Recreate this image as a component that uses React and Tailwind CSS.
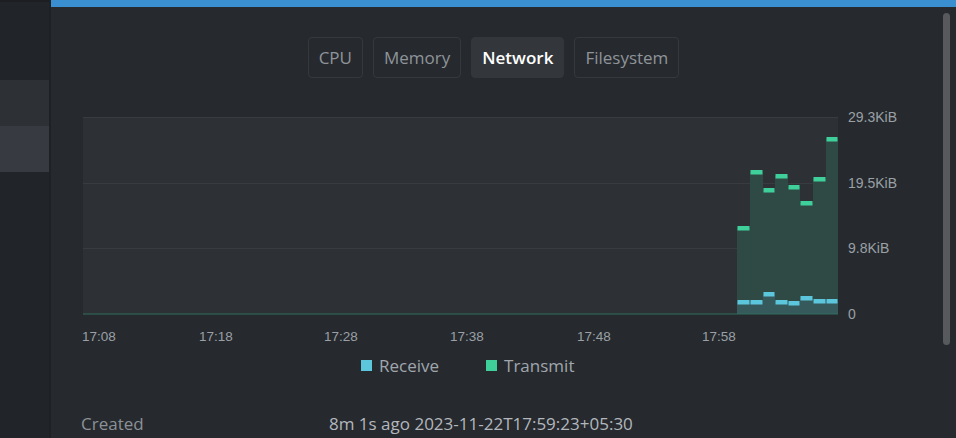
import React from 'react';

// Network chart data: step bars (x in page px, top y in page px)
const STEP_X = [737, 750, 763, 775, 788, 800, 813, 826, 838];
const TX_TOP = [228, 172, 190, 176, 187, 203, 179, 139];
const RX_TOP = [302, 302, 294, 302, 303, 298, 301, 301];

const OX = 81;
const OY = 108;

const tabs = ['CPU', 'Memory', 'Network', 'Filesystem'];

const Tab = ({ label, active }) => (
  <button
    type="button"
    className={`h-[41px] px-[10px] rounded-[4px] text-[17px] ${
      active
        ? 'bg-[#33363b] border border-[#33363b] text-white font-semibold'
        : 'border border-[#35393e] text-[#8f949a]'
    }`}
  >
    {label}
  </button>
);

function stepPath(tops, bottom) {
  let d = `M${STEP_X[0] - OX},${bottom - OY}`;
  tops.forEach((t, i) => {
    d += ` L${STEP_X[i] - OX},${t - OY} L${STEP_X[i + 1] - OX},${t - OY}`;
  });
  d += ` L${STEP_X[STEP_X.length - 1] - OX},${bottom - OY} Z`;
  return d;
}

const NetworkChart = () => {
  const plotL = 83 - OX;
  const plotR = 838 - OX;
  const gridY = [117, 183, 248, 314].map(y => y - OY);
  const yLabels = ['29.3KiB', '19.5KiB', '9.8KiB', '0'];
  const xLabels = [
    ['17:08', 82],
    ['17:18', 199],
    ['17:28', 324],
    ['17:38', 450],
    ['17:48', 577],
    ['17:58', 702],
  ];
  return (
    <svg width="840" height="240" className="block" style={{ fontFamily: '"Liberation Sans", Arial, sans-serif' }}>
      <rect x={plotL} y={gridY[0]} width={plotR - plotL} height={gridY[3] - gridY[0]} fill="#2d3135" />
      {gridY.slice(0, 3).map(y => (
        <line key={y} x1={plotL} x2={plotR} y1={y + 0.5} y2={y + 0.5} stroke="#383c41" strokeWidth="1" />
      ))}
      <path d={stepPath(TX_TOP, 314)} fill="#2f4a45" />
      <path d={stepPath(RX_TOP, 314)} fill="#36595c" />
      {TX_TOP.map((t, i) => (
        <rect key={`t${i}`} x={STEP_X[i] - OX + 0.5} y={t - OY - 2} width={STEP_X[i + 1] - STEP_X[i] - 1} height={4.5} fill="#3ecf9a" />
      ))}
      {RX_TOP.map((t, i) => (
        <rect key={`r${i}`} x={STEP_X[i] - OX + 0.5} y={t - OY - 2} width={STEP_X[i + 1] - STEP_X[i] - 1} height={4.5} fill="#5cc7dc" />
      ))}
      <line x1={plotL} x2={plotR} y1={gridY[3]} y2={gridY[3]} stroke="#2f6e5d" strokeWidth="1" />
      {yLabels.map((l, i) => (
        <text key={l} x={848 - OX} y={gridY[i] + 5} fontSize="14" fill="#9aa0a6">
          {l}
        </text>
      ))}
      {xLabels.map(([l, x]) => (
        <text key={l} x={x - OX} y={336 - OY + 5} fontSize="13.5" fill="#9aa0a6">
          {l}
        </text>
      ))}
    </svg>
  );
};

export default function App() {
  return (
    <div
      className="flex w-[956px] h-[438px] overflow-hidden bg-[#262a2e]"
      style={{ fontFamily: '"Open Sans", "Noto Sans", sans-serif' }}
    >
      {/* Sidebar */}
      <div className="w-[51px] shrink-0 flex flex-col bg-[#212428] border-r-[2px] border-[#1f2124]">
        <div className="h-[2px] bg-[#1c1e21]" />
        <div className="h-[78px]" />
        <div className="h-[46px] bg-[#2d3035]" />
        <div className="h-[46px] bg-[#373a41]" />
      </div>

      {/* Main */}
      <div className="flex-1 flex flex-col relative">
        <div className="h-[7px] bg-[#3a8fd0]" />
        <div className="absolute right-[6px] top-[13px] w-[7px] h-[332px] rounded-full bg-[#57595d]" />
        <div className="pr-[20px]">
          <div className="flex justify-center gap-[10px] mt-[30px]">
            {tabs.map(t => (
              <Tab key={t} label={t} active={t === 'Network'} />
            ))}
          </div>
          <div className="pl-[30px] mt-[30px]">
            <NetworkChart />
          </div>
          <div className="flex gap-[47px] mt-[5px] pl-[310px] text-[17px] text-[#a0a6ad]">
            <div className="flex items-center gap-[7px]">
              <span className="w-[11px] h-[11px] bg-[#5cc7dc]" />
              Receive
            </div>
            <div className="flex items-center gap-[7px]">
              <span className="w-[11px] h-[11px] bg-[#3ecf9a]" />
              Transmit
            </div>
          </div>
          <div className="flex pl-[30px] mt-[32px] text-[17px]">
            <div className="w-[248px] text-[#8c9198]">Created</div>
            <div className="text-[#b3b7bd] font-medium">8m 1s ago 2023-11-22T17:59:23+05:30</div>
          </div>
        </div>
      </div>
    </div>
  );
}
